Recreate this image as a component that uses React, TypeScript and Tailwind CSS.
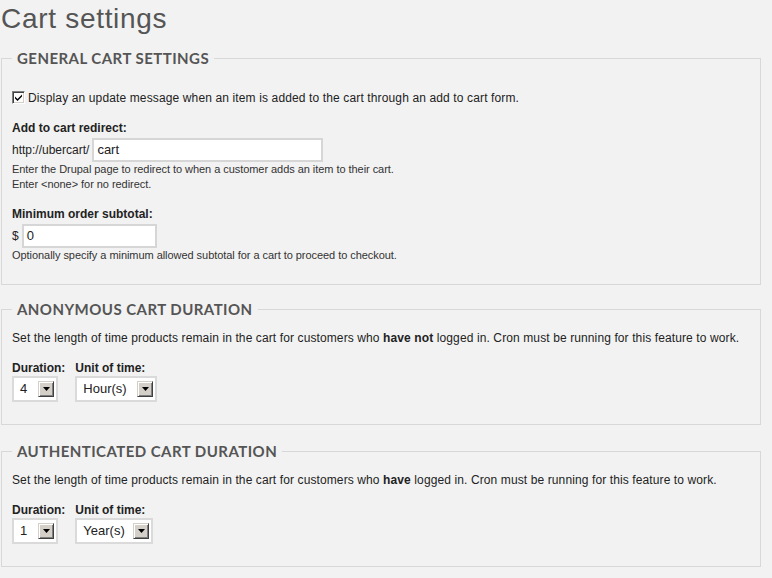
import type { ReactNode } from "react";

function Legend({ children }: { children: ReactNode }) {
  return (
    <legend className="px-[5px] font-['Lato',sans-serif] text-[15px] leading-[18px] font-bold uppercase tracking-[0.45px] text-[#555]">
      {children}
    </legend>
  );
}

function ArrowButton() {
  return (
    <div className="flex h-[16px] w-[16px] items-center justify-center border border-t-[#d4d0c8] border-l-[#d4d0c8] border-r-[#404040] border-b-[#404040] bg-[#d4d0c8] shadow-[inset_1px_1px_0_#fff,inset_-1px_-1px_0_#808080]">
      <svg width="7" height="4" viewBox="0 0 7 4">
        <path d="M0 0h7L3.5 4z" fill="#000" />
      </svg>
    </div>
  );
}

function FakeSelect({ value, width }: { value: string; width: string }) {
  return (
    <div className={`flex h-[26px] items-center justify-between border-2 border-[#dadada] bg-white pl-[6px] pr-[2px] text-[13px] text-[#222] ${width}`}>
      <span>{value}</span>
      <ArrowButton />
    </div>
  );
}

function Checkbox() {
  return (
    <div className="mt-[-1px] flex h-[13px] w-[13px] shrink-0 items-center justify-center border border-t-[#808080] border-l-[#808080] border-r-white border-b-white bg-white shadow-[inset_1px_1px_0_#404040,inset_-1px_-1px_0_#d4d0c8]">
      <svg width="7" height="7" viewBox="0 0 7 7">
        <path d="M0 2.5l2.5 2.5L7 0.5v2L2.5 7 0 4.5z" fill="#000" />
      </svg>
    </div>
  );
}

function DurationRow({ duration, unit, unitWidth }: { duration: string; unit: string; unitWidth: string }) {
  return (
    <div className="flex gap-[10px]">
      <div>
        <div className="text-[12px] leading-[16px] font-bold text-[#222]">Duration:</div>
        <FakeSelect value={duration} width="w-[46px]" />
      </div>
      <div>
        <div className="text-[12px] leading-[16px] font-bold text-[#222]">Unit of time:</div>
        <FakeSelect value={unit} width={unitWidth} />
      </div>
    </div>
  );
}

export default function App() {
  return (
    <div className="min-h-[578px] w-[772px] overflow-hidden bg-[#f2f2f2] font-['Liberation_Sans',Arial,sans-serif] text-[#222]">
      <h1 className="ml-[1px] pt-[3px] text-[28px] leading-[32px] tracking-[0.7px] text-[#555]">Cart settings</h1>

      {/* general */}
      <fieldset className="mt-[14px] ml-[1px] w-[760px] border border-[#d8d8d8] pr-[10px] pb-[21px] pl-[10px]">
        <Legend>General cart settings</Legend>
        <div className="mt-[23px] flex items-center gap-[3px] text-[12px] leading-[16px] tracking-[0.13px]">
          <Checkbox />
          <span>Display an update message when an item is added to the cart through an add to cart form.</span>
        </div>

        <div className="mt-[14px] text-[12px] leading-[16px] font-bold">Add to cart redirect:</div>
        <div className="mt-[2px] flex items-center gap-[3px] text-[12px] leading-[16px]">
          <span>http://ubercart/</span>
          <div className="flex h-[24px] w-[231px] items-center border-2 border-[#d6d6d6] bg-white pl-[3px] text-[13px]">cart</div>
        </div>
        <div className="text-[11px] leading-[15px] tracking-[-0.05px] text-[#333]">
          Enter the Drupal page to redirect to when a customer adds an item to their cart.
          <br />
          Enter &lt;none&gt; for no redirect.
        </div>

        <div className="mt-[14px] text-[12px] leading-[16px] font-bold">Minimum order subtotal:</div>
        <div className="mt-[2px] flex items-center gap-[3px] text-[12px] leading-[16px]">
          <span>$</span>
          <div className="flex h-[24px] w-[135px] items-center border-2 border-[#d6d6d6] bg-white pl-[3px] text-[13px]">0</div>
        </div>
        <div className="text-[11px] leading-[15px] tracking-[-0.05px] text-[#333]">
          Optionally specify a minimum allowed subtotal for a cart to proceed to checkout.
        </div>
      </fieldset>

      {/* anonymous */}
      <fieldset className="mt-[15px] ml-[1px] w-[760px] border border-[#d8d8d8] px-[10px] pb-[22px]">
        <Legend>Anonymous cart duration</Legend>
        <div className="mt-[12px] text-[12px] leading-[16px] tracking-[0.11px]">
          Set the length of time products remain in the cart for customers who <b>have not</b> logged in. Cron must be running for this feature to work.
        </div>
        <div className="mt-[14px]">
          <DurationRow duration="4" unit="Hour(s)" unitWidth="w-[82px]" />
        </div>
      </fieldset>

      {/* authenticated */}
      <fieldset className="mt-[17px] ml-[1px] w-[760px] border border-[#d8d8d8] px-[10px] pb-[22px]">
        <Legend>Authenticated cart duration</Legend>
        <div className="mt-[12px] text-[12px] leading-[16px] tracking-[0.11px]">
          Set the length of time products remain in the cart for customers who <b>have</b> logged in. Cron must be running for this feature to work.
        </div>
        <div className="mt-[14px]">
          <DurationRow duration="1" unit="Year(s)" unitWidth="w-[78px]" />
        </div>
      </fieldset>
    </div>
  );
}
